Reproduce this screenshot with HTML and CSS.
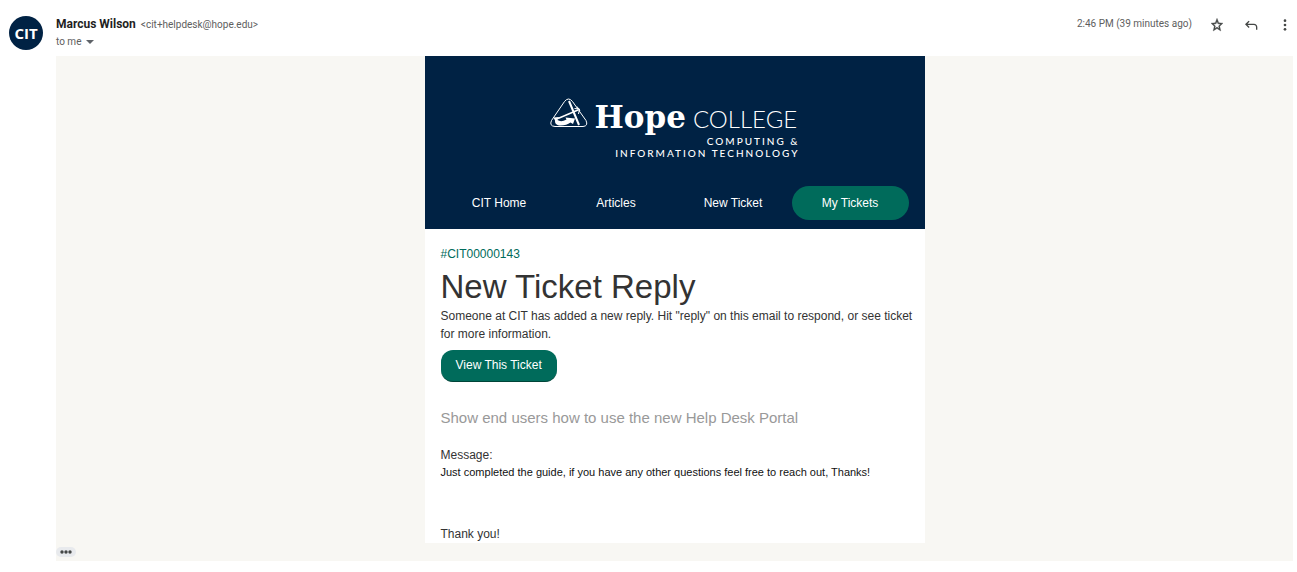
FILE: index.html
```html
<!DOCTYPE html>
<html lang="en">
<head>
<meta charset="utf-8">
<meta name="viewport" content="width=device-width, initial-scale=1">
<title>New Ticket Reply</title>
<link rel="stylesheet" href="styles.css">
</head>
<body>
<article class="mail">
  <div class="avatar" aria-hidden="true">CIT</div>
  <header class="mail-head">
    <div class="sender">
      <div class="sender-line"><span class="sender-name">Marcus Wilson</span><span class="sender-address">&lt;cit+helpdesk@hope.edu&gt;</span></div>
      <button class="recipients" type="button">to me
        <svg width="8" height="4" viewBox="0 0 8 4" aria-hidden="true"><path d="M0 0h8L4 4z" fill="#5f6368"/></svg>
      </button>
    </div>
    <div class="mail-tools">
      <time class="sent">2:46 PM (39 minutes ago)</time>
      <button class="tool" type="button" aria-label="Star">
        <svg width="16" height="16" viewBox="0 0 24 24" aria-hidden="true"><path fill="#444746" stroke="#444746" stroke-width=".5" d="M21 9.240l-6.400-.62L12 2 9.400 8.630 3 9.240l4.860 4.730L6.300 21 12 17.270 17.700 21l-1.560-7.030L21 9.240zM12 15.100l-3.260 2.270.9-3.980-2.820-2.780 3.880-.38L12 6.700l1.300 3.540 3.880.38-2.820 2.780.9 3.980L12 15.100z"/></svg>
      </button>
      <button class="tool" type="button" aria-label="Reply">
        <svg width="16" height="16" viewBox="0 0 24 24" aria-hidden="true"><path fill="#444746" d="M19.500 19v-4c0-1.660-1.340-3-3-3H6.830l3.080 3.090L8.500 16.500 3 11l5.500-5.500 1.410 1.410L6.830 10H16.500c2.760 0 5 2.240 5 5v4h-2z"/></svg>
      </button>
      <button class="tool" type="button" aria-label="More">
        <svg width="16" height="16" viewBox="0 0 24 24" aria-hidden="true"><g fill="#444746"><circle cx="12" cy="5.500" r="2"/><circle cx="12" cy="12" r="2"/><circle cx="12" cy="18.500" r="2"/></g></svg>
      </button>
    </div>
  </header>
  <div class="mail-body">
    <section class="card">
      <div class="banner">
        <div class="logo">
          <div class="logo-main">
            <svg class="logo-mark" width="38" height="30" viewBox="0 0 38 30" aria-hidden="true">
              <path d="M14.500 3.500Q18.500-1.500 22.500 3.500L36 22.500Q38.500 28 33 28.500H5Q-1 28 1.500 22.500Z" fill="none" stroke="#fff" stroke-width="1"/>
              <path d="M19 3L29 27" fill="none" stroke="#fff" stroke-width="2"/>
              <path d="M8 20.500L28 12" fill="none" stroke="#fff" stroke-width="1.500"/>
              <path d="M24.500 10.500L29.500 11L28.500 16M27 8.500L30 13" fill="none" stroke="#fff" stroke-width="1"/>
              <path d="M3.500 19.500L9 19L7.500 22Q11 24.500 16.500 21.500L15.500 19.500L25 20.500L23 26L20.500 24.500Q16 28 9 27.500Q4.500 26.500 5 22.500Z" fill="#fff"/>
            </svg>
            <span class="logo-hope">Hope</span>
            <span class="logo-college">COLLEGE</span>
          </div>
          <div class="logo-dept">COMPUTING &amp;<br>INFORMATION TECHNOLOGY</div>
        </div>
        <nav class="nav">
          <a href="#home">CIT Home</a>
          <a href="#articles">Articles</a>
          <a href="#new">New Ticket</a>
          <a class="nav-active" href="#tickets">My Tickets</a>
        </nav>
      </div>
      <div class="content">
        <a class="ticket-id" href="#ticket">#CIT00000143</a>
        <h1 class="title">New Ticket Reply</h1>
        <p class="intro">Someone at CIT has added a new reply. Hit "reply" on this email to respond, or see ticket for more information.</p>
        <a class="view" href="#ticket">View This Ticket</a>
        <h2 class="subject">Show end users how to use the new Help Desk Portal</h2>
        <p class="label">Message:</p>
        <p class="message">Just completed the guide, if you have any other questions feel free to reach out, Thanks!</p>
        <p class="closing">Thank you!</p>
      </div>
    </section>
    <button class="trimmed" type="button" aria-label="Show trimmed content">
      <svg width="12" height="4" viewBox="0 0 12 4" aria-hidden="true"><g fill="#444746"><circle cx="2" cy="2" r="1.700"/><circle cx="6" cy="2" r="1.700"/><circle cx="10" cy="2" r="1.700"/></g></svg>
    </button>
  </div>
</article>
</body>
</html>
```
FILE: styles.css
```css
* { box-sizing: border-box; }
body { margin: 0; background: #fff; font-family: "Liberation Sans", Arial, sans-serif; color: #333; }
button { border: 0; padding: 0; background: none; font: inherit; color: inherit; cursor: pointer; }
a { text-decoration: none; color: inherit; }
h1, h2, p { margin: 0; font-weight: 400; }
svg { display: block; }

.mail { display: grid; grid-template-columns: 34px minmax(0, 1fr); column-gap: 13px; padding: 16px 4px 0 9px; }
.avatar { width: 34px; height: 34px; border-radius: 50%; background: #002244; color: #fff; font: 700 15px/34px "Open Sans", sans-serif; text-align: center; }
.mail-head { display: flex; justify-content: space-between; align-items: flex-start; height: 40px; font-family: Roboto, sans-serif; color: #5e5e5e; }
.sender-line { display: flex; align-items: baseline; gap: 5px; font-size: 10px; line-height: 16px; }
.sender-name { font-size: 12px; font-weight: 700; color: #1f1f1f; }
.recipients { display: flex; align-items: center; gap: 5px; margin-top: 1px; font-size: 10px; line-height: 16px; }
.mail-tools { display: flex; align-items: flex-start; }
.sent { margin-right: 17px; font-size: 10px; line-height: 16px; }
.tool { padding-top: 1px; margin-right: 18px; }
.tool:last-child { margin-right: 0; }

.mail-body { grid-column: 2; padding-bottom: 4px; background: #f8f7f3; }
.card { max-width: 500px; margin: 0 auto; background: #fff; }
.banner { padding: 42px 16px 9px; background: #002244; color: #fff; }
.logo { width: 250px; margin: 0 auto; }
.logo-main { display: flex; align-items: baseline; line-height: 36px; height: 37px; white-space: nowrap; }
.logo-mark { margin-right: 7px; }
.logo-hope { margin-right: 7px; font: 700 31px/36px "DejaVu Serif", serif; }
.logo-college { font: 300 24px/36px Lato, sans-serif; }
.logo-dept { font: 500 10px/12px Lato, sans-serif; letter-spacing: 2px; text-align: right; }
.nav { display: grid; grid-template-columns: repeat(4, 1fr); margin-top: 27px; font-size: 12px; line-height: 34px; text-align: center; }
.nav-active { border-radius: 17px; background: #006b5b; }

.content { padding: 16px 8px 0 16px; font-size: 12px; line-height: 18px; }
.ticket-id { display: block; color: #006b5b; }
.title { margin-top: 4px; font-size: 33px; line-height: 40px; }
.view { display: inline-block; margin-top: 7px; padding: 0 15px; border-bottom: 1px solid #004438; border-radius: 12px; background: #006b5b; color: #fff; line-height: 31px; }
.subject { margin-top: 26px; font-size: 15px; line-height: 20px; color: #999; }
.label { margin-top: 18px; }
.message { font-size: 11px; line-height: 17px; color: #111; }
.closing { margin-top: 45px; line-height: 17px; }
.trimmed { display: grid; place-items: center; width: 20px; height: 10px; margin-top: 4px; border-radius: 5px; background: #e8eaed; }
```
